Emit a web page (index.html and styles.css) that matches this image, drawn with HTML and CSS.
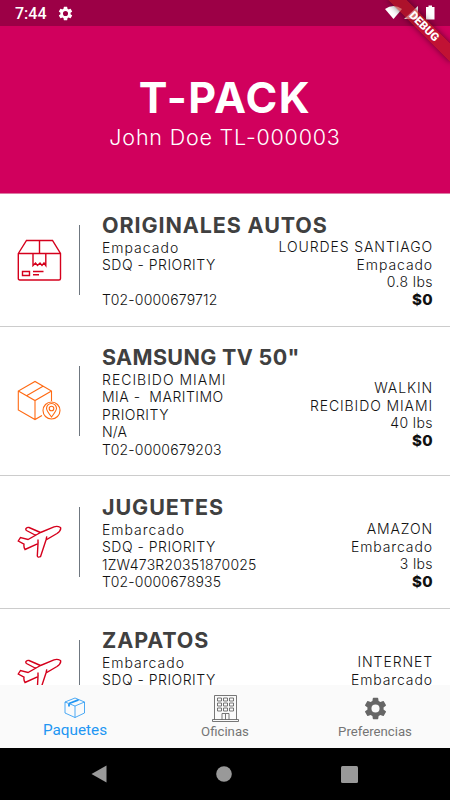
FILE: index.html
```html
<!doctype html>
<html lang="es">
<head>
    <meta charset="utf-8">
    <meta name="viewport" content="width=device-width, initial-scale=1">
    <title>T-PACK</title>
    <link rel="stylesheet" href="styles.css">
</head>
<body>
    <svg class="defs">
        <symbol id="gear" viewBox="0 0 24 24">
            <path d="M19.14 12.94c.04-.3.06-.61.06-.94s-.02-.64-.07-.94l2.03-1.58a.49.49 0 0 0 .12-.61l-1.92-3.32a.49.49 0 0 0-.59-.22l-2.39.96a7 7 0 0 0-1.62-.94l-.36-2.54A.48.48 0 0 0 13.92 2.4h-3.84a.48.48 0 0 0-.47.41l-.36 2.54a7 7 0 0 0-1.62.94l-2.39-.96a.48.48 0 0 0-.59.22L2.74 8.87a.48.48 0 0 0 .12.61l2.03 1.58a6 6 0 0 0 0 1.88l-2.03 1.58a.49.49 0 0 0-.12.61l1.92 3.32c.12.22.37.29.59.22l2.39-.96c.5.38 1.03.7 1.62.94l.36 2.54c.05.24.24.41.48.41h3.84c.24 0 .44-.17.47-.41l.36-2.54a7 7 0 0 0 1.62-.94l2.39.96c.22.08.47 0 .59-.22l1.92-3.32a.48.48 0 0 0-.12-.61zM12 15.6a3.6 3.6 0 1 1 0-7.2 3.6 3.6 0 0 1 0 7.2z"/>
        </symbol>
        <symbol id="plane" viewBox="0 0 44 44">
            <path d="M23 12.500L11.500 7.500Q10 7 8.500 8.500Q8 9.800 9 10.500L18.500 15.500M23 12.500L36.500 6.800Q40 5.700 43 7.500Q44 10.500 39.500 13.500L28.500 20L23 36.700Q20 37.800 19.800 36L20.500 23.500L7.500 29.500Q6 27 6.500 24.200L.8 21L3 17.500L10.500 19.500L23 12.500M28.500 20L29.300 16.300M20.500 23.500V19.500"/>
        </symbol>
    </svg>

    <header class="header">
        <div class="statusbar">
            <span class="clock">7:44</span>
            <svg class="status-gear"><use href="#gear"/></svg>
            <svg class="signals" width="52" height="16" viewBox="0 0 52 16">
                <path d="M0 4Q8.500-2 17 4L8.500 14z"/>
                <path d="M19 14L33 1V14z"/>
                <path d="M41 2H43.500V.5H47V2H49.500V14.500H41z"/>
            </svg>
        </div>
        <h1>T-PACK</h1>
        <p class="client">John Doe TL-000003</p>
        <div class="corner"><div class="debug">DEBUG</div></div>
    </header>

    <main class="packages">
        <article class="package">
            <svg class="icon red" viewBox="0 0 44 44">
                <path d="M.8 15.500L9 2.500H35L43 15.500V40.500Q43 42 41.500 42H2.300Q.8 42 .8 40.500zM.8 15.500H43M22 2.500V15.500M15.500 15.500V27.500L18 25L20 27.500L22.500 25L24.500 27.500L26.500 25L28.300 27.500V15.500M5 33.500H12V37.500H5zM15.500 33.500H26M15.500 36.800H21.500"/>
            </svg>
            <div class="info">
                <h2>ORIGINALES AUTOS</h2>
                <p>Empacado</p>
                <p class="service">SDQ - PRIORITY</p>
                <p></p>
                <p class="code">T02-0000679712</p>
            </div>
            <div class="detail">
                <p>LOURDES SANTIAGO</p>
                <p>Empacado</p>
                <p class="weight">0.8 lbs</p>
                <p class="price">$0</p>
            </div>
        </article>
        <article class="package">
            <svg class="icon orange" viewBox="0 0 44 44">
                <path d="M24.500 36.500L17.500 40.500L.8 31V12L17.500 2.500L34 12V22M.8 12L17.500 21.500L34 12M17.500 21.500V40.500M9 16.800L25.500 7.300"/>
                <circle cx="34" cy="31.500" r="8.500"/>
                <path d="M34 38Q29 31.500 29 29.500A5 5 0 0 1 39 29.500Q39 31.500 34 38z"/>
                <circle cx="34" cy="29.500" r="2.300"/>
            </svg>
            <div class="info">
                <h2 class="long">SAMSUNG TV 50"</h2>
                <p>RECIBIDO MIAMI</p>
                <p class="service">MIA -&nbsp; MARITIMO</p>
                <p class="service">PRIORITY</p>
                <p class="code">N/A</p>
                <p class="code">T02-0000679203</p>
            </div>
            <div class="detail">
                <p>WALKIN</p>
                <p>RECIBIDO MIAMI</p>
                <p class="weight">40 lbs</p>
                <p class="price">$0</p>
            </div>
        </article>
        <article class="package">
            <svg class="icon red"><use href="#plane"/></svg>
            <div class="info">
                <h2>JUGUETES</h2>
                <p>Embarcado</p>
                <p class="service">SDQ - PRIORITY</p>
                <p class="code">1ZW473R20351870025</p>
                <p class="code">T02-0000678935</p>
            </div>
            <div class="detail">
                <p>AMAZON</p>
                <p>Embarcado</p>
                <p class="weight">3 lbs</p>
                <p class="price">$0</p>
            </div>
        </article>
        <article class="package">
            <svg class="icon red"><use href="#plane"/></svg>
            <div class="info">
                <h2>ZAPATOS</h2>
                <p>Embarcado</p>
                <p class="service">SDQ - PRIORITY</p>
                <p></p>
                <p></p>
            </div>
            <div class="detail">
                <p>INTERNET</p>
                <p>Embarcado</p>
                <p></p>
                <p></p>
            </div>
        </article>
    </main>

    <nav class="tabs">
        <a class="tab active">
            <svg width="22" height="22" viewBox="0 0 22 22">
                <path d="M1 5L11 1L20.500 5V16L11 20.500L1 16zM1 5L11 9L20.500 5M11 9V20.500"/>
                <path class="tape" d="M5 7V9.500M5 6.500L14.500 2.800"/>
            </svg>
            Paquetes
        </a>
        <a class="tab">
            <svg class="building" width="28" height="28" viewBox="0 0 28 28">
                <path d="M3.500 25.500V1.500H25.500V25.500M1.500 25.500H27.500V27.500H1.500zM6.500 4H10.500V7H6.500zM12.500 4H16.500V7H12.500zM18.500 4H22.500V7H18.500zM6.500 9H10.500V12H6.500zM12.500 9H16.500V12H12.500zM18.500 9H22.500V12H18.500zM6.500 14H10.500V17H6.500zM12.500 14H16.500V17H12.500zM18.500 14H22.500V17H18.500zM11 25.500V19.500H18V25.500M14.500 20V25.500"/>
            </svg>
            Oficinas
        </a>
        <a class="tab">
            <svg class="prefs" width="27" height="27"><use href="#gear"/></svg>
            Preferencias
        </a>
    </nav>

    <footer class="sysnav">
        <svg width="16" height="18" viewBox="0 0 16 18"><path d="M.5 9L15.500.5V17.500z"/></svg>
        <svg width="16" height="16"><circle cx="8" cy="8" r="7.800"/></svg>
        <svg width="17" height="17"><rect width="17" height="17" rx="1.500"/></svg>
    </footer>
</body>
</html>
```
FILE: styles.css
```css
* {
    box-sizing: border-box;
}

body {
    display: flex;
    flex-direction: column;
    width: 450px;
    height: 800px;
    margin: 0;
    overflow: hidden;
    background-color: white;
    color: #111;
    font-family: Inter, sans-serif;
}

h1, h2, p {
    margin: 0;
    white-space: nowrap;
}

.defs {
    display: none;
}

/* header */
.header {
    position: relative;
    flex: none;
    height: 194px;
    background-color: #d1005d;
    border-bottom: 1px solid #dc7aa3;
    color: white;
    text-align: center;
}

.statusbar {
    display: flex;
    align-items: center;
    height: 26px;
    padding: 0 13px 0 15px;
    background-color: #9c0046;
}

.clock {
    font: 500 16px/26px Roboto, sans-serif;
    padding-top: 2px;
}

.status-gear {
    width: 17px;
    height: 17px;
    margin-left: 10px;
    fill: white;
}

.signals {
    margin-left: auto;
    fill: white;
}

h1 {
    margin-top: 46px;
    font-size: 43px;
    line-height: 50px;
    font-weight: 700;
    letter-spacing: 1.400px;
}

.client {
    font-size: 21.500px;
    line-height: 30px;
    font-weight: 300;
    letter-spacing: .8px;
}

.corner {
    position: absolute;
    top: 0;
    right: 0;
    width: 90px;
    height: 90px;
    overflow: hidden;
}

.debug {
    position: absolute;
    top: 19.800px;
    left: 20px;
    width: 88px;
    height: 13px;
    background-color: rgba(183, 28, 28, .63);
    box-shadow: 0 0 6px rgba(0, 0, 0, .5);
    font: 900 11.500px/13px Roboto, sans-serif;
    transform: rotate(45deg);
}

/* package list */
.packages {
    flex: 1;
    min-height: 0;
    overflow: hidden;
}

.package {
    display: flex;
    align-items: center;
    height: 133px;
    padding: 0 17px 0 17px;
    border-bottom: 1px solid #ccc;
    font-size: 14px;
    line-height: 17.500px;
    font-weight: 300;
    letter-spacing: 1px;
}

.package:nth-child(2) {
    height: 149px;
}

.icon {
    flex: none;
    width: 45px;
    height: 44px;
    fill: none;
    stroke-width: 1.400;
}

.red {
    stroke: #d5001c;
}

.orange {
    stroke: #ff6a13;
    stroke-width: 1.100;
}

.info {
    position: relative;
    margin-top: -1px;
    padding-left: 40px;
}

.info::before {
    content: "";
    position: absolute;
    left: 17px;
    top: calc(50% - 35px);
    width: 1px;
    height: 70px;
    background-color: #6f7780;
}

.info p, .detail p {
    height: 17.500px;
}

.service {
    letter-spacing: .5px;
}

.code {
    letter-spacing: .2px;
}

h2 {
    margin-right: -100px;
    font-size: 21.500px;
    line-height: 28px;
    font-weight: 700;
    letter-spacing: .9px;
    color: #404040;
}

h2.long {
    letter-spacing: .35px;
}

.detail {
    margin-left: auto;
    padding-top: 26px;
    text-align: right;
    letter-spacing: .9px;
}

.weight {
    letter-spacing: .4px;
}

.price {
    font-size: 15px;
    font-weight: 800;
    letter-spacing: .4px;
}

/* bottom tabs */
.tabs {
    display: grid;
    grid-template-columns: repeat(3, 1fr);
    flex: none;
    height: 63px;
    background-color: #fafafa;
}

.tab {
    display: flex;
    flex-direction: column;
    align-items: center;
    justify-content: flex-end;
    padding-bottom: 8px;
    color: #757575;
    font: 13.200px/16px Roboto, sans-serif;
}

.tab svg {
    margin-bottom: 2px;
    fill: none;
    stroke: #2196f3;
    stroke-width: .8;
}

.tab .tape {
    stroke-width: 1.800;
}

.tab .building {
    stroke: #555;
}

.tab .prefs {
    fill: #666;
    stroke: none;
}

.tab.active {
    padding-bottom: 9px;
    color: #2196f3;
    font-size: 15.300px;
    line-height: 18px;
}

/* android buttons */
.sysnav {
    display: flex;
    flex: none;
    align-items: center;
    justify-content: space-between;
    height: 52px;
    padding: 0 92px 0 91px;
    background-color: black;
    fill: #999;
}
```
